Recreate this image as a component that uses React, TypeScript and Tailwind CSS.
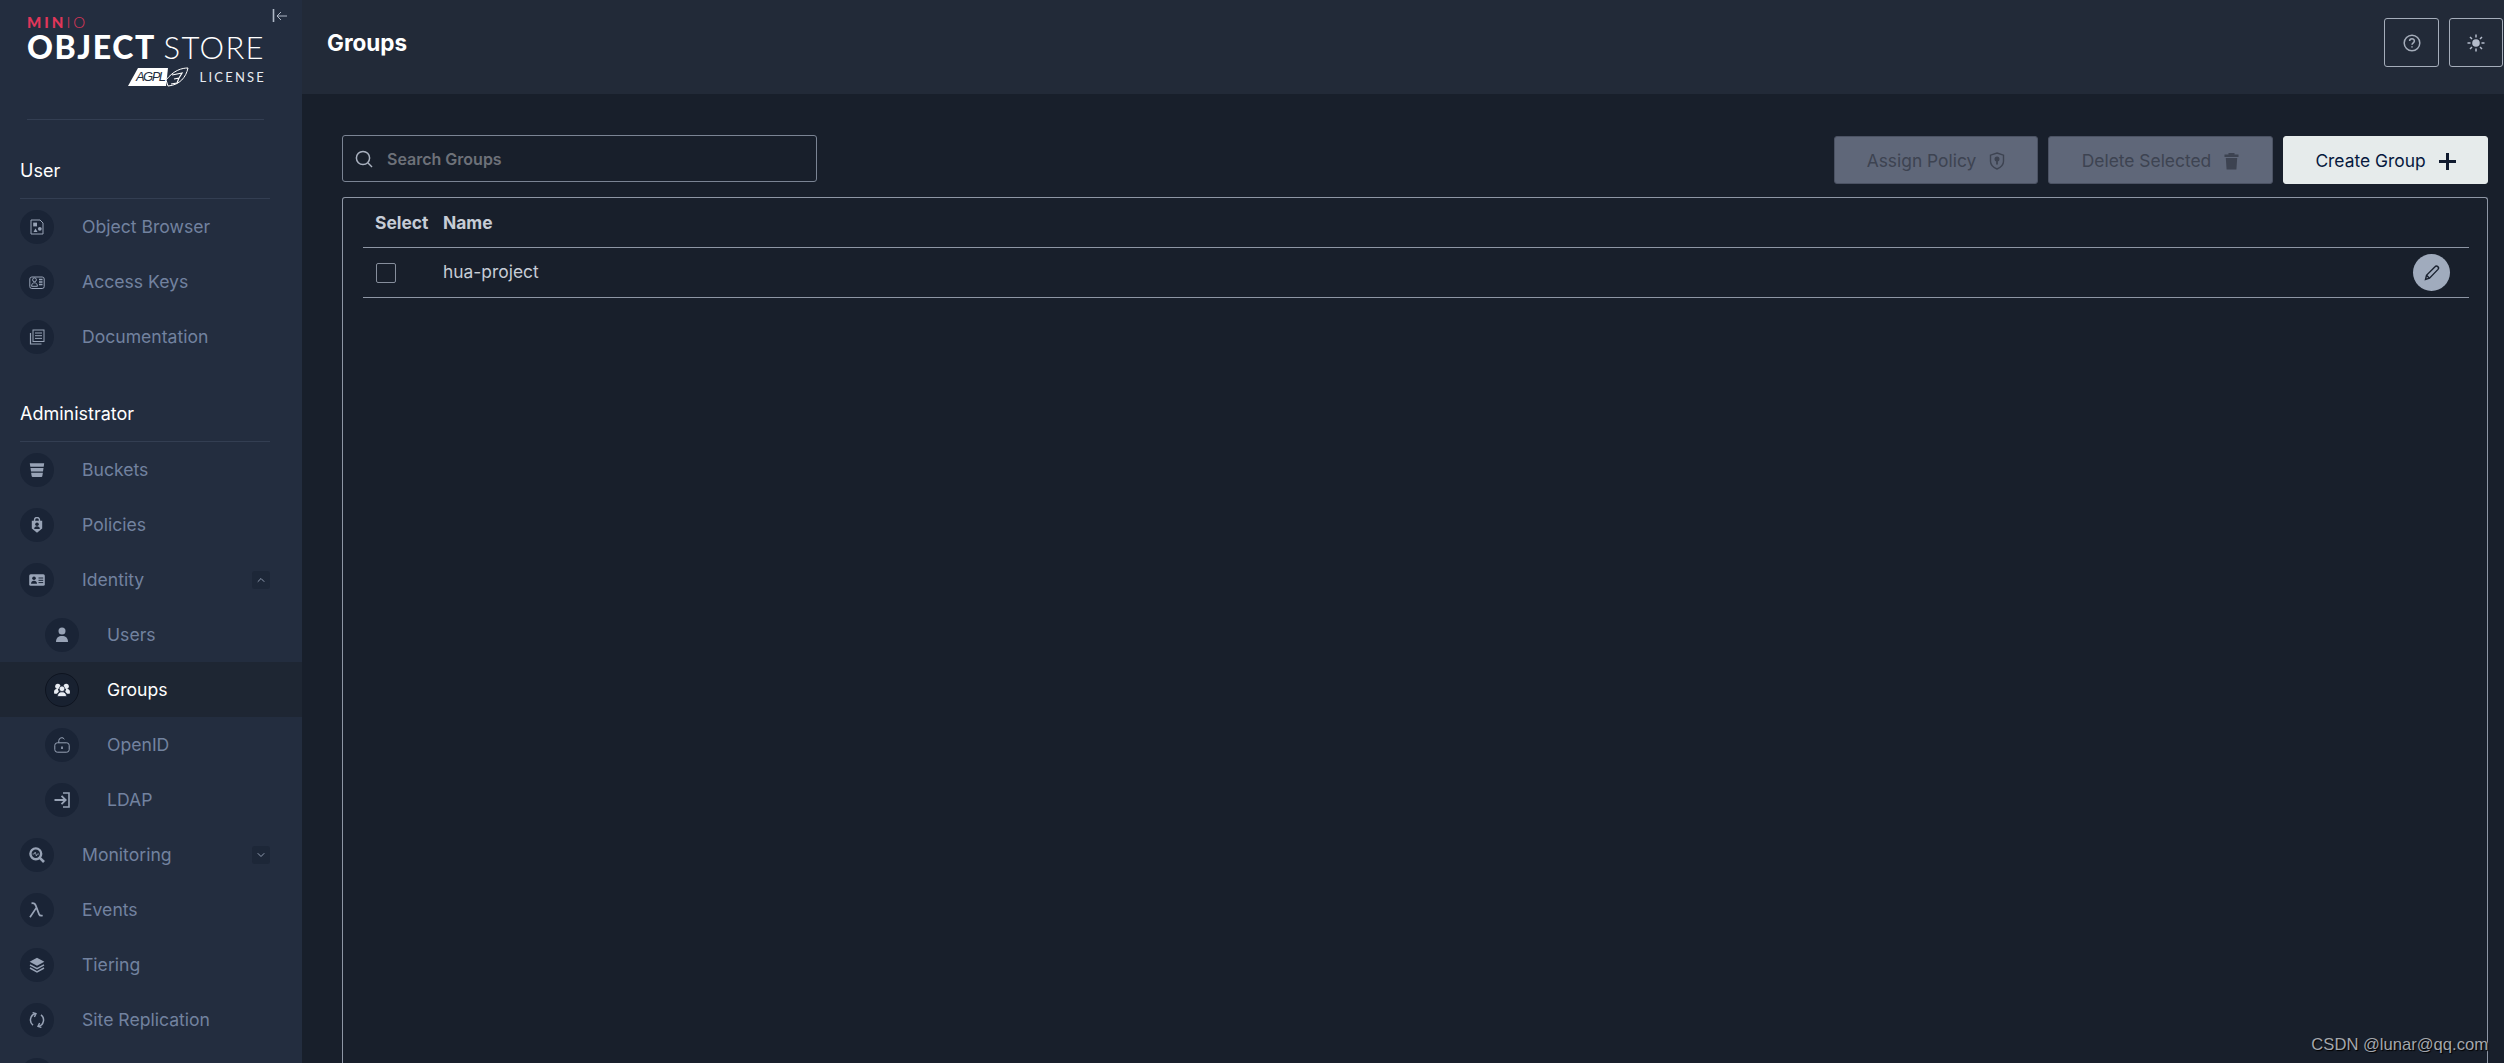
import { ReactNode } from 'react'
import { ChevronDown, ChevronUp } from 'lucide-react'

const Ico = ({ children, size = 16 }: { children: ReactNode; size?: number }) => (
  <svg width={size} height={size} viewBox="0 0 16 16" fill="none" stroke="currentColor" strokeWidth="1">
    {children}
  </svg>
)

const icons: Record<string, ReactNode> = {
  object: (
    <Ico>
      <path d="M2 1h9l3 3v11H2z" />
      <rect x="4.2" y="3.6" width="3.8" height="3.8" fill="currentColor" stroke="none" />
      <path d="M4.5 13l2-3.4 2 3.4z" fill="currentColor" stroke="none" />
      <circle cx="10.8" cy="9.8" r="1.9" fill="currentColor" stroke="none" />
    </Ico>
  ),
  keys: (
    <Ico>
      <rect x="0.8" y="3" width="14.4" height="11.5" rx="2" />
      <circle cx="5.5" cy="5.8" r="1.9" />
      <path d="M2.6 12.3c0-2.3 1.2-3.5 2.9-3.5s2.9 1.2 2.9 3.5z" />
      <path d="M10 5.5h3.5M10 8h3.5M10 10.5h3.5" strokeWidth="1.5" />
    </Ico>
  ),
  docs: (
    <Ico>
      <path d="M1.5 4v11h11" strokeWidth="1.2" />
      <rect x="4" y="1" width="11" height="11.5" />
      <path d="M6 4h7M6 6.7h7M6 9.4h7" />
    </Ico>
  ),
  bucket: (
    <Ico>
      <path d="M0.8 1.2h14.4l-.5 3.6H1.3z" fill="currentColor" stroke="none" />
      <path d="M1.5 5.9h13l-.5 3.7H2z" fill="currentColor" stroke="none" />
      <path d="M2.1 10.7h11.8l-.6 3.6a1 1 0 0 1-1 .7H3.7a1 1 0 0 1-1-.7z" fill="currentColor" stroke="none" />
    </Ico>
  ),
  policy: (
    <Ico>
      <path d="M5.5 4V3a2.5 2.5 0 0 1 5 0v1" strokeWidth="1.4" />
      <path d="M2.8 3.8h10.4v7.8L8 15.8l-5.2-4.2z" fill="currentColor" stroke="none" />
      <circle cx="8" cy="7.3" r="1.8" fill="#1a2436" stroke="none" />
      <path d="M5.2 12c0-1.7 1.1-2.7 2.8-2.7s2.8 1 2.8 2.7z" fill="#1a2436" stroke="none" />
    </Ico>
  ),
  identity: (
    <Ico>
      <rect x="0.2" y="2.2" width="15.6" height="11.6" rx="1.5" fill="currentColor" stroke="none" />
      <circle cx="5" cy="6.2" r="1.8" fill="#1a2436" stroke="none" />
      <path d="M2 11.7c0-1.9 1.3-3 3-3s3 1.1 3 3z" fill="#1a2436" stroke="none" />
      <path d="M9.5 6h4.7M9.5 8.3h4.7M9.5 10.6h4.7" stroke="#1a2436" />
    </Ico>
  ),
  user: (
    <Ico>
      <circle cx="8" cy="4" r="3.5" fill="currentColor" stroke="none" />
      <path d="M2 15c0-4.4 2.6-6 6-6s6 1.6 6 6z" fill="currentColor" stroke="none" />
    </Ico>
  ),
  group: (
    <Ico>
      <circle cx="3.8" cy="4.3" r="2.6" fill="currentColor" stroke="none" />
      <circle cx="12.2" cy="4.3" r="2.6" fill="currentColor" stroke="none" />
      <circle cx="8" cy="6.8" r="2.8" fill="currentColor" stroke="#1a2436" strokeWidth="0.7" />
      <path d="M0 10c0-2.2 1.6-3.2 3.8-3.2l1 3-2 2H.3zM16 10c0-2.2-1.6-3.2-3.8-3.2l-1 3 2 2h2.5z" fill="currentColor" stroke="none" />
      <path d="M3.5 14.5c0-3.2 2-4.7 4.5-4.7s4.5 1.5 4.5 4.7z" fill="currentColor" stroke="#1a2436" strokeWidth="0.7" />
    </Ico>
  ),
  openid: (
    <Ico>
      <rect x="0.8" y="5.8" width="14.4" height="9.4" rx="2.5" />
      <path d="M4.8 5.8V3.6a3 3 0 0 1 5.6-1.4" />
      <path d="M8 9.5v2.5" strokeWidth="1.6" />
    </Ico>
  ),
  ldap: (
    <Ico>
      <path d="M9 1h6v14H9" strokeWidth="1.6" />
      <path d="M0.5 8h11M7.5 3.8L11.7 8l-4.2 4.2" strokeWidth="1.8" />
    </Ico>
  ),
  monitoring: (
    <Ico>
      <circle cx="6.8" cy="6.8" r="5.4" strokeWidth="2.4" />
      <path d="M3.5 7h1.7l1-2 1.2 4 .9-2H10" strokeWidth="0.8" />
      <path d="M10.8 10.8l4.2 4.2" strokeWidth="2.6" />
    </Ico>
  ),
  events: (
    <svg width="16" height="16" viewBox="0 0 16 16" fill="none" stroke="currentColor" strokeWidth="1.7">
      <path d="M2.5 1.3c2.5-.6 3.6.4 4.4 2.6l3.2 8.5c.5 1.3 1.6 1.6 3.6 1.1M7.4 5.6L1 15.3" />
    </svg>
  ),
  tiering: (
    <Ico>
      <path d="M8 .8l7.4 4L8 8.8.6 4.8z" fill="currentColor" stroke="none" />
      <path d="M1 7.8L8 11.6l7-3.8M1 11L8 14.8l7-3.8" strokeWidth="1.5" />
    </Ico>
  ),
  replication: (
    <Ico>
      <path d="M4 13.2A6.6 6.6 0 0 1 6.5 1.6" strokeWidth="1.5" />
      <path d="M3.6 0.6l3.4 1-1.6 3.4" strokeWidth="1.4" />
      <path d="M12 2.8A6.6 6.6 0 0 1 9.5 14.4" strokeWidth="1.5" />
      <path d="M12.4 15.4l-3.4-1 1.6-3.4" strokeWidth="1.4" />
    </Ico>
  ),
  settings: <Ico><circle cx="8" cy="8" r="5" /></Ico>,
}

function NavRow(props: { icon: string; label?: string; sub?: boolean; active?: boolean; open?: boolean; closed?: boolean }) {
  return (
    <div
      className={
        'h-[55px] flex items-center pr-[32px] ' +
        (props.sub ? 'pl-[45px] ' : 'pl-[20px] ') +
        (props.active ? 'bg-[#1e2633] text-white' : 'text-[#72829f]')
      }
    >
      <div
        className={
          'w-[34px] h-[34px] rounded-full flex items-center justify-center shrink-0 ' +
          (props.active ? 'bg-[#182130] border border-[#0e1420] text-[#e8ecf2]' : 'bg-[#1a2436] text-[#98a3b6]')
        }
      >
        {icons[props.icon]}
      </div>
      <span className="ml-[28px] text-[17.6px] leading-6 flex-1">{props.label}</span>
      {props.open && (
        <span className="w-[18px] h-[18px] rounded-[3px] bg-[#1d2738] flex items-center justify-center text-[#8f9bb0]">
          <ChevronUp size={12} />
        </span>
      )}
      {props.closed && (
        <span className="w-[18px] h-[18px] rounded-[3px] bg-[#1d2738] flex items-center justify-center text-[#8f9bb0]">
          <ChevronDown size={12} />
        </span>
      )}
    </div>
  )
}

function SectionLabel(props: { children: ReactNode; height: string }) {
  return (
    <div className={'mx-[20px] mr-[32px] flex items-end pb-[15px] border-b border-[#333e52] text-white text-[18px] leading-6 ' + props.height}>
      {props.children}
    </div>
  )
}

function Logo() {
  return (
    <div className="ml-[27px] mr-[38px] h-[120px] border-b border-[#333e52] pt-[15px] font-['Lato',sans-serif] text-white">
      <div className="h-[14px] flex items-center text-[#e0365a] text-[15px] leading-none tracking-[3px]">
        <span className="font-black">MIN</span>
        <span className="font-light">IO</span>
      </div>
      <div className="h-[32px] mt-[2px] flex items-center justify-between text-[32px] leading-none whitespace-nowrap">
        <span className="font-black tracking-[1.6px]">OBJECT</span>
        <span className="font-light tracking-[1.4px] text-[31px] -mr-[1px]">STORE</span>
      </div>
      <div className="mt-[4px] flex items-center justify-end">
        <svg width="61" height="20" viewBox="0 0 61 20">
          <path d="M10 1h30l-2 18H0z" fill="#fff" />
          <text x="8" y="14" fontSize="13" fontStyle="italic" fontFamily="Liberation Sans" fill="#232d3f" textLength="30">
            AGPL
          </text>
          <path d="M38 13c8-10 16-12 22-12-2 9-8 17-20 18z" fill="#232d3f" stroke="#fff" strokeWidth="1" />
          <path d="M44 8l10-2-3 5-5 1m5-1l-2 5-6 1" fill="none" stroke="#fff" strokeWidth="1.2" />
        </svg>
        <span className="ml-[11px] text-[13px] leading-none tracking-[2.2px] mr-[-2px] text-[#e8ecf2]">LICENSE</span>
      </div>
    </div>
  )
}

function Sidebar() {
  return (
    <aside className="relative w-[302px] shrink-0 h-full overflow-hidden bg-[#232d3f]">
      <svg className="absolute left-[272px] top-[8px] text-[#aeb7c6]" width="16" height="16" viewBox="0 0 16 16" fill="none" stroke="currentColor">
        <path d="M1.5 1v13" strokeWidth="1.6" />
        <path d="M15 8H5M9 4L5 8l4 4" strokeWidth="1" />
      </svg>
      <Logo />
      <SectionLabel height="h-[79px]">User</SectionLabel>
      <NavRow icon="object" label="Object Browser" />
      <NavRow icon="keys" label="Access Keys" />
      <NavRow icon="docs" label="Documentation" />
      <SectionLabel height="h-[78px]">Administrator</SectionLabel>
      <NavRow icon="bucket" label="Buckets" />
      <NavRow icon="policy" label="Policies" />
      <NavRow icon="identity" label="Identity" open />
      <NavRow icon="user" label="Users" sub />
      <NavRow icon="group" label="Groups" sub active />
      <NavRow icon="openid" label="OpenID" sub />
      <NavRow icon="ldap" label="LDAP" sub />
      <NavRow icon="monitoring" label="Monitoring" closed />
      <NavRow icon="events" label="Events" />
      <NavRow icon="tiering" label="Tiering" />
      <NavRow icon="replication" label="Site Replication" />
      <NavRow icon="settings" />
    </aside>
  )
}

function ActionButton(props: { label: string; icon: ReactNode; width: string; primary?: boolean }) {
  return (
    <button
      className={
        'h-[48px] pt-[2px] rounded-[3px] flex items-center justify-center gap-[13px] text-[17.4px] border ' +
        props.width +
        (props.primary
          ? ' bg-[#e6ebeb] border-[#e6ebeb] text-[#07193e]'
          : ' bg-[#5f6779] border-[#4b5263] text-[#3d4351]')
      }
    >
      {props.label}
      {props.icon}
    </button>
  )
}

export default function App() {
  return (
    <div className="relative flex h-screen w-full overflow-hidden bg-[#181f2b] font-['Inter',sans-serif]">
      <Sidebar />
      <main className="flex-1 min-w-0 flex flex-col">
        <header className="h-[94px] shrink-0 bg-[#222a38] flex items-center pl-[25px] pr-[1px]">
          <h1 className="flex-1 text-white font-bold text-[22.5px] leading-none -mt-[8px]">Groups</h1>
          <button className="w-[55px] h-[49px] rounded-[3px] border border-[#a5adba] flex items-center justify-center text-[#a5adba] -mt-[9px]">
            <svg width="18" height="18" viewBox="0 0 18 18" fill="none" stroke="currentColor" strokeWidth="1.5">
              <circle cx="9" cy="9" r="7.8" />
              <path d="M6.6 7c0-3 4.8-3 4.8 0 0 1.8-2.4 1.8-2.4 3.8M9 12.2v1.3" />
            </svg>
          </button>
          <button className="ml-[10px] w-[54px] h-[49px] rounded-[3px] border border-[#a5adba] flex items-center justify-center text-[#b4bccb] -mt-[9px]">
            <svg width="18" height="18" viewBox="0 0 18 18" fill="none" stroke="currentColor" strokeWidth="1.5">
              <circle cx="9" cy="9" r="3.8" fill="currentColor" stroke="none" />
              <path d="M9 0.5v3M9 14.5v3M0.5 9h3M14.5 9h3M3 3l2 2M13 13l2 2M3 15l2-2M13 5l2-2" />
            </svg>
          </button>
        </header>
        <div className="flex-1 min-h-0 pl-[40px] pr-[16px] pt-[41px] flex flex-col">
          <div className="flex items-start justify-between">
            <div className="w-[475px] h-[47px] rounded-[3px] border border-[#7b8494] flex items-center pl-[12px]">
              <svg width="18" height="18" viewBox="0 0 18 18" fill="none" stroke="#aab2c0" strokeWidth="1.5">
                <circle cx="8" cy="8" r="6.6" />
                <path d="M13 13l4 4" />
              </svg>
              <span className="ml-[14px] text-[#6d7179] text-[16px] font-semibold">Search Groups</span>
            </div>
            <div className="flex items-center gap-[10px] pt-[1px]">
              <ActionButton
                label="Assign Policy"
                width="w-[204px]"
                icon={
                  <svg width="16" height="18" viewBox="0 0 16 18" fill="none" stroke="currentColor" strokeWidth="1.4">
                    <path d="M8 1l6.5 2.2v6c0 4-3 6.3-6.5 7.8-3.5-1.5-6.5-3.8-6.5-7.8v-6z" />
                    <circle cx="8" cy="7" r="1.8" fill="currentColor" />
                    <path d="M8 8v4.5" strokeWidth="1.8" />
                  </svg>
                }
              />
              <ActionButton
                label="Delete Selected"
                width="w-[225px]"
                icon={
                  <svg width="15" height="18" viewBox="0 0 15 18" fill="currentColor">
                    <path d="M0.5 2.5h4V1h6v1.5h4V5H.5zM1.8 6h11.4l-.8 11.5H2.6z" />
                  </svg>
                }
              />
              <ActionButton
                label="Create Group"
                width="w-[205px]"
                primary
                icon={
                  <svg width="17" height="17" viewBox="0 0 17 17" stroke="#101a2e" strokeWidth="3">
                    <path d="M8.5 0v17M0 8.5h17" />
                  </svg>
                }
              />
            </div>
          </div>
          <div className="mt-[13px] flex-1 rounded-t-[3px] border border-b-0 border-[#8e96a5] pl-[20px] pr-[18px] -mb-[2px]">
            <div className="h-[50px] flex items-center border-b border-[#8e96a5] text-[#c6ccd6] font-bold text-[17.4px] leading-none">
              <span className="ml-[12px] w-[68px]">Select</span>
              <span>Name</span>
            </div>
            <div className="h-[50px] flex items-center border-b border-[#8e96a5]">
              <span className="ml-[13px] w-[20px] h-[20px] rounded-[2px] border border-[#868e9c]" />
              <span className="ml-[47px] flex-1 text-[#c6ccd6] text-[17.4px]">hua-project</span>
              <button className="w-[37px] h-[37px] mr-[19px] rounded-full bg-[#a0abbd] flex items-center justify-center text-[#1a2230]">
                <svg width="18" height="18" viewBox="0 0 18 18" fill="none" stroke="currentColor" strokeWidth="1.4">
                  <path d="M2.5 15.5l1-4.2L12 2.8a1.8 1.8 0 0 1 3 2.6l-8.5 8.8z" />
                  <path d="M3.5 11.3l3 2.9" />
                </svg>
              </button>
            </div>
          </div>
        </div>
      </main>
      <span className="absolute right-[16px] top-[1034px] font-['Liberation_Sans',sans-serif] text-[16.6px] leading-[22px] text-[#a4a7ad] [text-shadow:1px_1px_1px_#000]">
        CSDN @lunar@qq.com
      </span>
    </div>
  )
}
